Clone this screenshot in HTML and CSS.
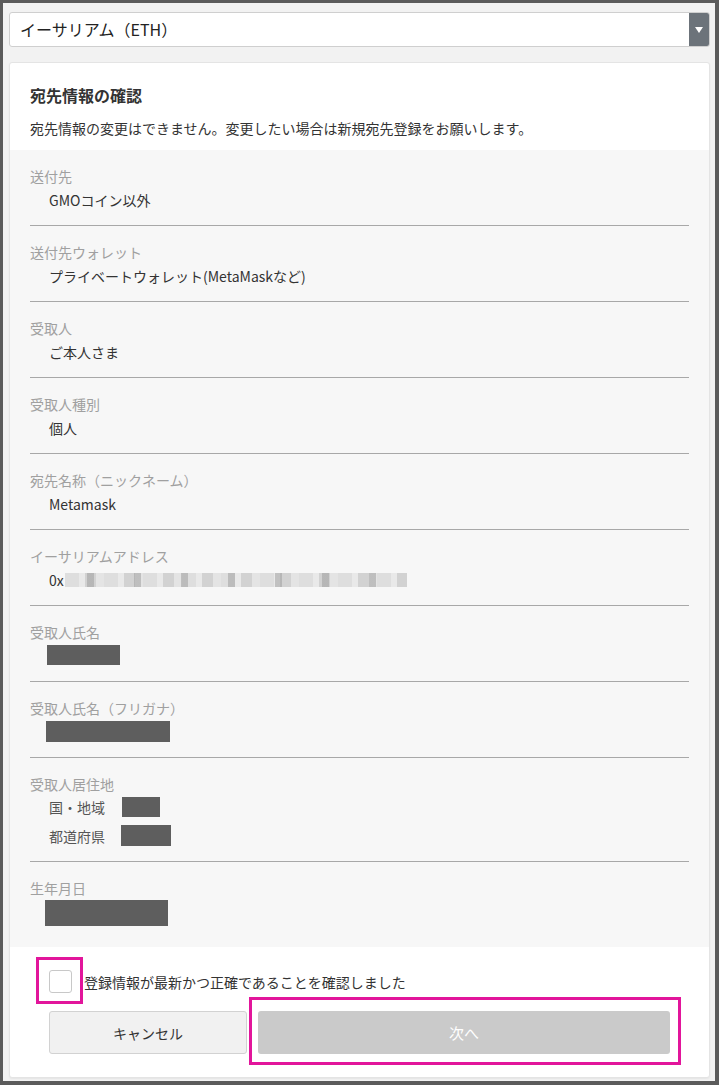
FILE: index.html
```html
<!DOCTYPE html>
<html lang="ja">

<head>
    <meta charset="UTF-8">
    <meta name="viewport" content="width=device-width, initial-scale=1.0">
    <title>宛先情報の確認</title>
    <link rel="stylesheet" href="styles.css">
</head>

<body>
    <div class="frame">
        <div class="select-box">
            <span class="select-text">イーサリアム（ETH）</span>
            <span class="select-arrow">
                <svg width="8" height="6" viewBox="0 0 8 6"><path d="M0 0 L8 0 L4 6 Z" fill="#fff"/></svg>
            </span>
        </div>

        <div class="card">
            <div class="card-head">
                <h2>宛先情報の確認</h2>
                <p>宛先情報の変更はできません。変更したい場合は新規宛先登録をお願いします。</p>
            </div>

            <div class="info-list">
                <div class="info-item">
                    <div class="info-label">送付先</div>
                    <div class="info-value">GMOコイン以外</div>
                </div>
                <div class="info-item">
                    <div class="info-label">送付先ウォレット</div>
                    <div class="info-value">プライベートウォレット(MetaMaskなど)</div>
                </div>
                <div class="info-item">
                    <div class="info-label">受取人</div>
                    <div class="info-value">ご本人さま</div>
                </div>
                <div class="info-item">
                    <div class="info-label">受取人種別</div>
                    <div class="info-value">個人</div>
                </div>
                <div class="info-item">
                    <div class="info-label">宛先名称（ニックネーム）</div>
                    <div class="info-value">Metamask</div>
                </div>
                <div class="info-item">
                    <div class="info-label">イーサリアムアドレス</div>
                    <div class="info-value address">0x<span class="blur"></span></div>
                </div>
                <div class="info-item">
                    <div class="info-label">受取人氏名</div>
                    <div class="redacted"><span class="redact name"></span></div>
                </div>
                <div class="info-item">
                    <div class="info-label">受取人氏名（フリガナ）</div>
                    <div class="redacted"><span class="redact kana"></span></div>
                </div>
                <div class="info-item">
                    <div class="info-label">受取人居住地</div>
                    <div class="sub-rows">
                        <div class="sub-row">
                            <span class="sub-label">国・地域</span>
                            <span class="redact country"></span>
                        </div>
                        <div class="sub-row">
                            <span class="sub-label">都道府県</span>
                            <span class="redact pref"></span>
                        </div>
                    </div>
                </div>
                <div class="info-item last">
                    <div class="info-label">生年月日</div>
                    <div class="redacted"><span class="redact birth"></span></div>
                </div>
            </div>

            <div class="card-foot">
                <label class="check-row">
                    <span class="check-wrap">
                        <span class="checkbox"></span>
                        <span class="mark check-mark"></span>
                    </span>
                    <span class="check-text">登録情報が最新かつ正確であることを確認しました</span>
                </label>
                <div class="btn-row">
                    <button class="btn btn-cancel">キャンセル</button>
                    <div class="next-wrap">
                        <button class="btn btn-next" disabled>次へ</button>
                        <span class="mark next-mark"></span>
                    </div>
                </div>
            </div>
        </div>
    </div>
</body>

</html>
```

FILE: styles.css
```css
* {
    box-sizing: border-box;
}

html,
body {
    margin: 0;
    padding: 0;
}

body {
    font-family: "Noto Sans CJK JP", "Noto Sans", sans-serif;
    color: #333;
    font-size: 14px;
}

.frame {
    width: 719px;
    height: 1085px;
    border: 3px solid #5b5b5b;
    border-right-width: 4px;
    border-bottom-width: 4px;
    background: #f2f2f2;
    padding: 9px 5px 0 6px;
}

.select-box {
    display: flex;
    height: 35px;
    background: #fff;
    border: 1px solid #cfcfcf;
    border-radius: 3px;
    overflow: hidden;
}

.select-text {
    flex: 1;
    padding-left: 10px;
    font-size: 16px;
    line-height: 33px;
    color: #222;
}

.select-arrow {
    width: 20px;
    background: #6c737a;
    display: flex;
    align-items: center;
    justify-content: center;
}

.card {
    margin-top: 15px;
    height: 1016px;
    background: #fff;
    border: 1px solid #e4e4e4;
    border-radius: 3px;
    box-shadow: 0 1px 2px rgba(0, 0, 0, 0.06);
}

.card-head {
    padding: 22px 20px 12px;
}

.card-head h2 {
    margin: 0 0 13px;
    font-size: 16px;
    line-height: 20px;
    font-weight: bold;
    color: #333;
}

.card-head p {
    margin: 0;
    font-size: 14px;
    line-height: 20px;
    color: #333;
}

.info-list {
    background: #f7f7f7;
    padding-bottom: 21px;
}

.info-item {
    margin: 0 20px;
    padding: 16px 0 15px;
    border-bottom: 1px solid #a8a8a8;
}

.info-item.last {
    border-bottom: none;
    padding-bottom: 0;
}

.info-label {
    font-size: 14px;
    line-height: 20px;
    color: #a0a0a0;
}

.info-value {
    margin-top: 4px;
    padding-left: 19px;
    font-size: 14px;
    line-height: 20px;
    height: 20px;
    color: #333;
    display: flex;
    align-items: center;
}

.address .blur {
    display: inline-block;
    width: 342px;
    height: 14px;
    margin-left: 1px;
    background:
        repeating-linear-gradient(90deg, transparent 0 22px, rgba(160, 160, 160, 0.55) 22px 29px, transparent 29px 47px),
        repeating-linear-gradient(90deg, #dedede 0 14px, #e9e9e9 14px 20px, #d2d2d2 20px 31px, #e4e4e4 31px 39px);
}

.redacted {
    line-height: 0;
}

.redact {
    display: inline-block;
    background: #5e5e5e;
}

.redact.name {
    width: 73px;
    height: 20px;
    margin: 3px 0 1px 17px;
}

.redact.kana {
    width: 124px;
    height: 21px;
    margin: 3px 0 0 16px;
}

.redact.birth {
    width: 123px;
    height: 26px;
    margin: 2px 0 0 15px;
}

.sub-rows {
    padding-left: 19px;
    margin-top: 3px;
}

.sub-row {
    display: flex;
    align-items: center;
    height: 20px;
    margin-top: 8px;
    line-height: 20px;
    color: #555;
}

.sub-row:first-child {
    margin-top: 0;
}

.sub-row:last-child {
    height: 21px;
}

.sub-label {
    width: 72px;
}

.redact.country {
    width: 38px;
    height: 20px;
    margin-left: 1px;
}

.redact.pref {
    width: 50px;
    height: 21px;
}

.card-foot {
    padding: 23px 39px 0 38px;
}

.check-row {
    display: flex;
    align-items: center;
    height: 23px;
}

.check-wrap {
    position: relative;
    width: 23px;
    height: 23px;
    margin-left: 1px;
}

.checkbox {
    display: block;
    width: 23px;
    height: 23px;
    background: #fff;
    border: 1px solid #c8c8c8;
    border-radius: 3px;
}

.check-text {
    margin-left: 12px;
    font-size: 14px;
    line-height: 20px;
    color: #333;
}

.mark {
    position: absolute;
    border: 3px solid #e2159b;
}

.check-mark {
    left: -13px;
    top: -13px;
    width: 47px;
    height: 47px;
}

.btn-row {
    display: flex;
    gap: 11px;
    margin-top: 18px;
    padding-left: 1px;
}

.btn {
    height: 43px;
    border-radius: 3px;
    font-family: "Noto Sans CJK JP", "Noto Sans", sans-serif;
    font-size: 14px;
}

.btn-cancel {
    width: 198px;
    background: #f1f1f1;
    border: 1px solid #d2d2d2;
    color: #333;
}

.next-wrap {
    position: relative;
    flex: 1;
}

.btn-next {
    width: 100%;
    background: #cacaca;
    border: none;
    color: #fff;
    font-size: 15px;
}

.next-mark {
    left: -9px;
    top: -14px;
    right: -11px;
    bottom: -11px;
}
```
